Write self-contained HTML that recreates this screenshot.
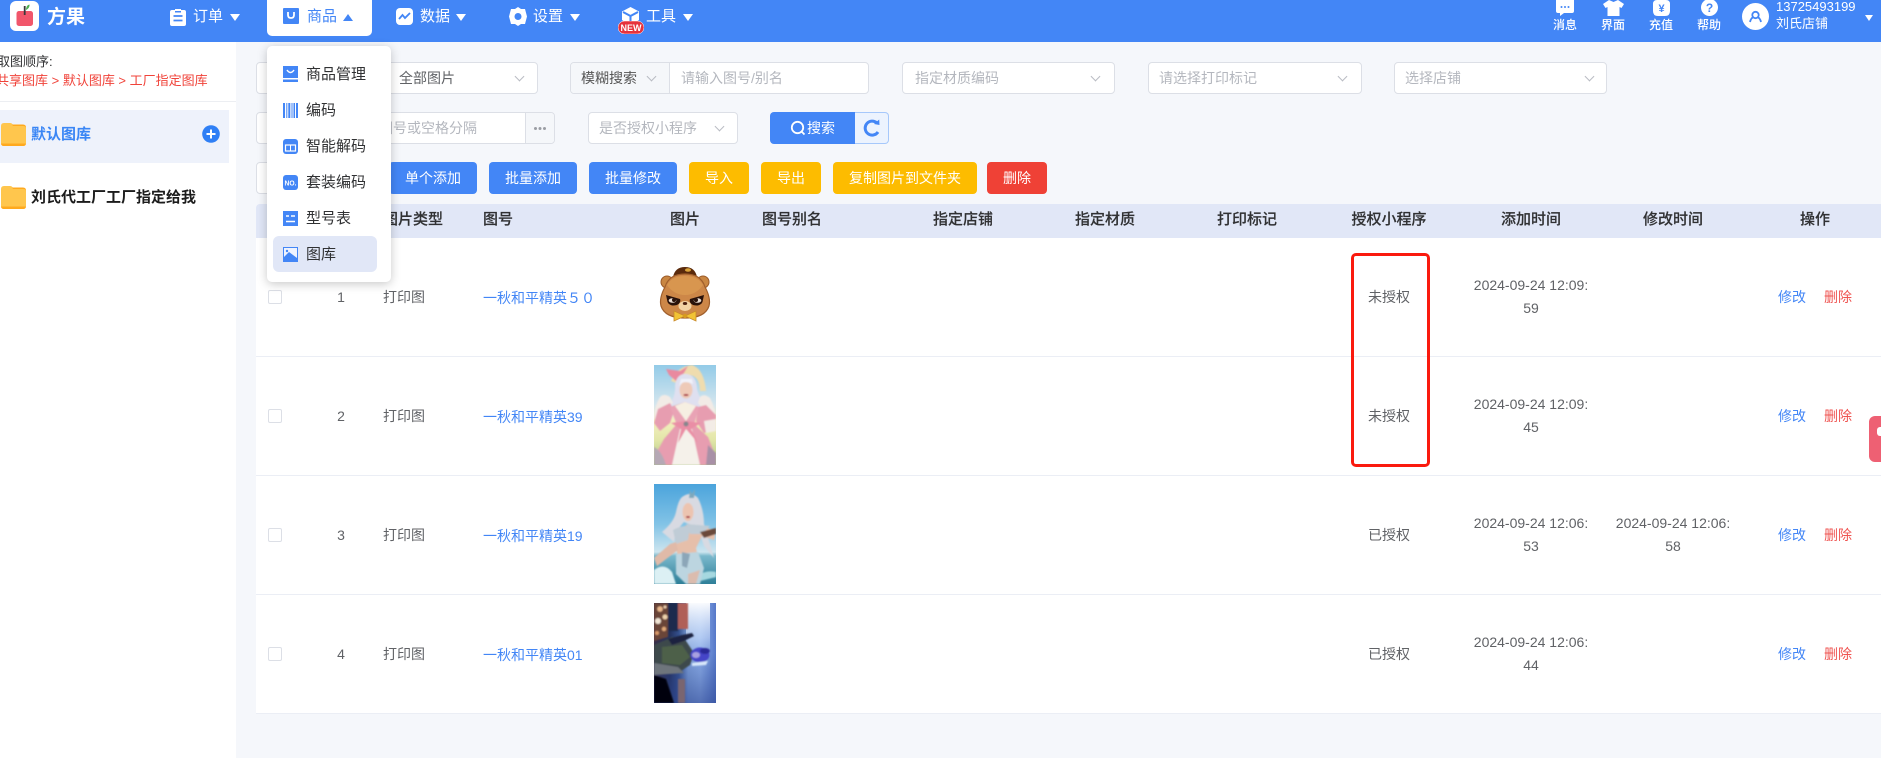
<!DOCTYPE html>
<html lang="zh"><head><meta charset="utf-8"><title>图库</title>
<style>
*{box-sizing:border-box}
html,body{margin:0;padding:0}
body{width:1881px;height:758px;overflow:hidden;position:relative;background:#f5f7fb;font-family:"Liberation Sans","Noto Sans CJK SC",sans-serif;font-size:14px;color:#606266}
.a,.t,.b,.box,.ch,.car,svg{position:absolute}
.t{white-space:nowrap;line-height:20px;height:20px}
.c{transform:translateX(-50%)}
.hd{background:#4386f6;left:0;top:0;width:1881px;height:42px}
.nav{color:#fff;font-size:15px;top:7px}
.car{width:0;height:0;border-left:5px solid transparent;border-right:5px solid transparent;border-top:7px solid #fff}
.up{border-top:0;border-bottom:7px solid #4386f6}
.tl{color:#fff;font-size:12px;top:15px;line-height:20px}
.box{background:#fff;border:1px solid #dcdfe6;border-radius:4px;height:32px}
.ph{color:#b4b7be;font-size:14px}
.ch{width:7px;height:7px;border-right:1px solid #b9bcc3;border-bottom:1px solid #b9bcc3;transform:rotate(45deg)}
.b{height:32px;top:162px;border-radius:4px;color:#fff;text-align:center;line-height:32px;font-size:14px}
.bl{background:#4386f6}.am{background:#fdbc00}.rd{background:#ef4136}
.th{color:#303133;font-size:15px;top:210px;font-weight:500;-webkit-text-stroke:.15px #303133}
.row{left:256px;width:1625px;height:119px;background:#fff;border-bottom:1px solid #ebeef5}
.cb{position:absolute;left:268px;width:14px;height:14px;background:#fff;border:1px solid #dcdfe6;border-radius:2px}
.lnk{color:#4386f6;font-size:14px;left:483px}
.op{color:#4386f6}.del{color:#ef5350}
.dd{left:267px;top:46px;width:124px;height:236px;background:#fff;border-radius:5px;box-shadow:0 2px 10px rgba(0,0,0,.22)}
.mi{left:306px;color:#303133;font-size:15px}
</style></head><body>

<!-- sidebar -->
<div class="a" style="left:0;top:42px;width:236px;height:716px;background:#fff"></div>
<div class="t" style="left:-3px;top:52px;font-size:13px;color:#303133">取图顺序:</div>
<div class="t" style="left:-4px;top:71px;font-size:13px;color:#f0433a">共享图库 &gt; 默认图库 &gt; 工厂指定图库</div>
<div class="a" style="left:0;top:101px;width:236px;height:1px;background:#eceef2"></div>
<div class="a" style="left:0;top:110px;width:229px;height:53px;background:#eef2fb"></div>
<svg style="left:1px;top:123px" width="25" height="23" viewBox="0 0 25 23"><path d="M0 3Q0 0 3 0H9Q11 0 12 2H22Q25 2 25 5V20Q25 23 22 23H3Q0 23 0 20Z" fill="#ffc64d"/><path d="M0 20.500H25V20Q25 23 22 23H3Q0 23 0 20Z" fill="#ffa91e"/><path d="M11 1.500H22Q25 1.500 25 4.500V5.500Q25 3 22 3H12Z" fill="#ffa91e"/></svg>
<div class="t" style="left:31px;top:125px;font-size:15px;font-weight:700;color:#3a86f5">默认图库</div>
<svg style="left:202px;top:125px" width="18" height="18" viewBox="0 0 18 18"><circle cx="9" cy="9" r="8.8" fill="#2f7ff5"/><path d="M4.5 9h9M9 4.5v9" stroke="#fff" stroke-width="2"/></svg>
<svg style="left:1px;top:186px" width="25" height="23" viewBox="0 0 25 23"><path d="M0 3Q0 0 3 0H9Q11 0 12 2H22Q25 2 25 5V20Q25 23 22 23H3Q0 23 0 20Z" fill="#ffc64d"/><path d="M0 20.500H25V20Q25 23 22 23H3Q0 23 0 20Z" fill="#ffa91e"/><path d="M11 1.500H22Q25 1.500 25 4.500V5.500Q25 3 22 3H12Z" fill="#ffa91e"/></svg>
<div class="t" style="left:31px;top:188px;font-size:15px;font-weight:700;color:#1c1c1c">刘氏代工厂工厂指定给我</div>

<!-- filters -->
<div class="box" style="left:256px;top:62px;width:282px"></div>
<div class="t" style="left:399px;top:68px;color:#606266">全部图片</div>
<div class="ch" style="left:516px;top:73px"></div>
<div class="box" style="left:570px;top:62px;width:299px"></div>
<div class="a" style="left:571px;top:63px;width:99px;height:30px;background:#f5f7fa;border-right:1px solid #dcdfe6;border-radius:3px 0 0 3px"></div>
<div class="t" style="left:581px;top:68px;color:#555">模糊搜索</div>
<div class="ch" style="left:648px;top:73px"></div>
<div class="t ph" style="left:681px;top:68px">请输入图号/别名</div>
<div class="box" style="left:902px;top:62px;width:213px"></div>
<div class="t ph" style="left:915px;top:68px">指定材质编码</div>
<div class="ch" style="left:1092px;top:73px"></div>
<div class="box" style="left:1148px;top:62px;width:214px"></div>
<div class="t ph" style="left:1159px;top:68px">请选择打印标记</div>
<div class="ch" style="left:1339px;top:73px"></div>
<div class="box" style="left:1394px;top:62px;width:213px"></div>
<div class="t ph" style="left:1405px;top:68px">选择店铺</div>
<div class="ch" style="left:1586px;top:73px"></div>

<div class="box" style="left:256px;top:112px;width:299px"></div>
<div class="a" style="left:525px;top:113px;width:29px;height:30px;background:#f5f7fa;border-left:1px solid #dcdfe6;border-radius:0 3px 3px 0"></div>
<div class="a" style="left:534px;top:127px;width:3px;height:3px;border-radius:2px;background:#9b9ea4;box-shadow:4.500px 0 0 #9b9ea4,9px 0 0 #9b9ea4"></div>
<div class="t ph" style="left:379px;top:118px">图号或空格分隔</div>
<div class="box" style="left:588px;top:112px;width:150px"></div>
<div class="t ph" style="left:599px;top:118px">是否授权小程序</div>
<div class="ch" style="left:716px;top:123px"></div>
<div class="a" style="left:770px;top:112px;width:85px;height:32px;background:#4386f6;border-radius:4px 0 0 4px"></div>
<svg style="left:790px;top:120px" width="16" height="16" viewBox="0 0 16 16"><circle cx="7.5" cy="7.5" r="5.7" fill="none" stroke="#fff" stroke-width="1.8"/><path d="M11.5 11.5l3 3" stroke="#fff" stroke-width="1.8"/></svg>
<div class="t" style="left:807px;top:118px;color:#fff">搜索</div>
<div class="a" style="left:855px;top:112px;width:34px;height:32px;background:#ecf3fe;border:1px solid #a6c8fb;border-left:0;border-radius:0 4px 4px 0"></div>
<svg style="left:863px;top:119px" width="18" height="18" viewBox="0 0 18 18"><path d="M14 4A7 7 0 1 0 15 13" fill="none" stroke="#4386f6" stroke-width="3"/><path d="M11 5l5.500 1-.3-5.500z" fill="#4386f6"/></svg>

<div class="box" style="left:256px;top:162px;width:140px"></div>
<div class="b bl" style="left:389px;width:88px">单个添加</div>
<div class="b bl" style="left:489px;width:88px">批量添加</div>
<div class="b bl" style="left:589px;width:88px">批量修改</div>
<div class="b am" style="left:689px;width:60px">导入</div>
<div class="b am" style="left:761px;width:60px">导出</div>
<div class="b am" style="left:833px;width:144px">复制图片到文件夹</div>
<div class="b rd" style="left:987px;width:60px">删除</div>

<!-- table -->
<div class="a" style="left:256px;top:204px;width:1625px;height:34px;background:#e1e7f7;border-radius:4px 0 0 0"></div>
<div class="t th" style="left:383px">图片类型</div>
<div class="t th" style="left:483px">图号</div>
<div class="t th c" style="left:685px">图片</div>
<div class="t th" style="left:762px">图号别名</div>
<div class="t th c" style="left:963px">指定店铺</div>
<div class="t th c" style="left:1105px">指定材质</div>
<div class="t th c" style="left:1247px">打印标记</div>
<div class="t th c" style="left:1389px">授权小程序</div>
<div class="t th c" style="left:1531px">添加时间</div>
<div class="t th c" style="left:1673px">修改时间</div>
<div class="t th c" style="left:1815px">操作</div>

<div class="a row" style="top:238px"></div>
<div class="a row" style="top:357px"></div>
<div class="a row" style="top:476px"></div>
<div class="a row" style="top:595px"></div>

<div class="cb" style="top:290px"></div><div class="t c" style="left:341px;top:287px">1</div><div class="t" style="left:383px;top:287px">打印图</div><div class="t lnk" style="top:288px">一秋和平精英５０</div>
<div class="cb" style="top:409px"></div><div class="t c" style="left:341px;top:406px">2</div><div class="t" style="left:383px;top:406px">打印图</div><div class="t lnk" style="top:407px">一秋和平精英39</div>
<div class="cb" style="top:528px"></div><div class="t c" style="left:341px;top:525px">3</div><div class="t" style="left:383px;top:525px">打印图</div><div class="t lnk" style="top:526px">一秋和平精英19</div>
<div class="cb" style="top:647px"></div><div class="t c" style="left:341px;top:644px">4</div><div class="t" style="left:383px;top:644px">打印图</div><div class="t lnk" style="top:645px">一秋和平精英01</div>

<!-- bear -->
<svg style="left:658px;top:265px" width="54" height="60" viewBox="0 0 54 60">
<path d="M15 12Q17 2 27 2T39 12Z" fill="#5a2a0c"/><ellipse cx="30" cy="5" rx="3" ry="1.800" fill="#d9a23a"/>
<circle cx="9" cy="17" r="6" fill="#c98642" stroke="#9a5a28"/><circle cx="45" cy="17" r="6" fill="#c98642" stroke="#9a5a28"/>
<path d="M7 22Q11 9 27 9T47 22Q53 33 51 41Q47 53 27 53T3 41Q1 33 7 22Z" fill="#cd8748" stroke="#a05f2c" stroke-width="1.200"/>
<path d="M9 20Q14 11 27 11T45 20Q38 30 27 30T9 20Z" fill="#d8964f"/>
<path d="M8 30l14 4a6.500 5 0 0 1-12.500 3z" fill="#2a120a"/><path d="M46 30l-14 4a6.500 5 0 0 0 12.500 3z" fill="#2a120a"/>
<ellipse cx="14.500" cy="35.500" rx="3.800" ry="2.300" fill="#e9dcd2"/><ellipse cx="39.500" cy="35.500" rx="3.800" ry="2.300" fill="#e9dcd2"/>
<circle cx="16" cy="35" r="2" fill="#2a120a"/><circle cx="38" cy="35" r="2" fill="#2a120a"/>
<ellipse cx="27" cy="41" rx="6.500" ry="5" fill="#f3d3a4"/><ellipse cx="27" cy="38.500" rx="2.200" ry="1.500" fill="#4a2010"/>
<path d="M27 51L16 46V56ZM27 51L38 46V56Z" fill="#f1c335" stroke="#c98a2a" stroke-width=".8"/><circle cx="27" cy="51" r="2.200" fill="#d79a20"/>
</svg>

<!-- image 2 -->
<svg style="left:654px;top:365px" width="62" height="100" viewBox="0 0 62 100">
<defs><filter id="f1" x="-10%" y="-10%" width="120%" height="120%"><feGaussianBlur stdDeviation="0.7"/></filter>
<linearGradient id="g1" x1="0" y1="0" x2="0" y2="1"><stop offset="0" stop-color="#93cbe8"/><stop offset=".4" stop-color="#d5e6ee"/><stop offset=".55" stop-color="#f4f0c0"/><stop offset=".75" stop-color="#e2e6a8"/><stop offset="1" stop-color="#a9c784"/></linearGradient></defs>
<rect width="62" height="100" fill="url(#g1)"/>
<g filter="url(#f1)">
<path d="M17 16Q24 1 38 0Q50 4 52 26L46 26Q46 12 36 10Q26 10 22 18Z" fill="#efdcae"/>
<path d="M12 4L26 6L34 1L30 8L22 16L15 10Z" fill="#e9899f"/>
<path d="M21 20Q23 8 33 9Q43 11 43 24Q46 36 53 42L40 42L34 38H26L14 42Q22 32 21 20Z" fill="#dfe0f0"/>
<ellipse cx="32" cy="25" rx="6.500" ry="8.500" fill="#eecab8"/><path d="M25 22Q28 14 39 19L38 14L27 14Z" fill="#f1f2fa"/><ellipse cx="32" cy="30" rx="2.500" ry="1" fill="#a82c3c"/>
<path d="M0 54Q0 42 6 32Q10 28 16 32L19 38Q12 42 12 52Z" fill="#f2ebe6"/><path d="M62 58Q62 44 56 33Q50 28 46 32L44 38Q50 44 50 52Z" fill="#f2ebe6"/>
<path d="M0 58L4 44L16 38L20 46L16 58L6 66Z" fill="#e79db0"/><path d="M62 64V50L52 40L44 42L42 56L50 68Z" fill="#e79db0"/>
<path d="M50 56L62 54V66L52 68Z" fill="#f3ece6"/>
<path d="M16 42L31 37L45 42L40 60H23Z" fill="#e9a3b5"/><path d="M21 41L31 37L42 41L32 56Z" fill="#f6efe2"/>
<path d="M22 60H41L54 72L62 92V100H0V92L10 74Z" fill="#e79db0"/>
<path d="M26 64H38L46 100H18Z" fill="#f5f1ea"/>
<path d="M17 58L32 56L47 58L37 64L44 78L32 64L24 78L27 64Z" fill="#ea8ea5"/><circle cx="32" cy="59" r="2.500" fill="#87878e"/>
<path d="M0 82Q8 86 12 100H0Z" fill="#b5a8b5"/><path d="M54 80L62 88V100H52Z" fill="#a890a6"/>
</g></svg>

<!-- image 3 -->
<svg style="left:654px;top:484px" width="62" height="100" viewBox="0 0 62 100">
<defs><linearGradient id="g2" x1="0" y1="0" x2="0" y2="1"><stop offset="0" stop-color="#4ba4dc"/><stop offset=".4" stop-color="#82c3e6"/><stop offset=".68" stop-color="#cde5ef"/><stop offset=".72" stop-color="#7ab8cc"/><stop offset="1" stop-color="#2e7f98"/></linearGradient></defs>
<rect width="62" height="100" fill="url(#g2)"/>
<g filter="url(#f1)">
<path d="M0 86Q10 78 18 88L22 100H0Z" fill="#dcf0f4"/><path d="M46 90Q54 86 62 88V93L46 97Z" fill="#a6d8e0"/>
<path d="M27 14Q36 6 44 14Q50 26 50 40L60 74L50 62L44 44L30 38Q22 46 20 58L8 48Q20 38 22 28Q24 18 27 14Z" fill="#d8dae2"/>
<ellipse cx="34" cy="28" rx="5.500" ry="9" fill="#ecc4b0"/><ellipse cx="34" cy="33" rx="2" ry="1" fill="#a83040"/>
<path d="M35 14L36 6L38 10L41 5L40 14Z" fill="#7fa8bc"/>
<path d="M22 48Q32 38 46 42L60 46Q62 50 60 56L48 52L42 64L44 74H24L22 62Z" fill="#e6bfaa"/>
<path d="M19 46Q30 40 36 44L34 56L22 60ZM32 40L56 42L48 50L36 50Z" fill="#c0ccd6"/>
<path d="M0 74L16 60L22 58L24 66L3 82Z" fill="#e0baa8"/>
<path d="M46 48L62 44V50L50 54Z" fill="#6b4a3a"/>
<path d="M22 70L44 68L50 84L46 100H32L22 90Z" fill="#bcd5e0"/><path d="M28 68L36 70L33 84L28 82Z" fill="#8ca6b8"/>
<path d="M34 90L46 86L42 100H34Z" fill="#dbbcae"/>
</g></svg>

<!-- image 4 -->
<svg style="left:654px;top:603px" width="62" height="100" viewBox="0 0 62 100">
<defs><linearGradient id="g3" x1="0" y1="0" x2="1" y2="0"><stop offset="0" stop-color="#3b3048"/><stop offset=".25" stop-color="#23305c"/><stop offset=".4" stop-color="#34508c"/><stop offset=".55" stop-color="#7ea0d8"/><stop offset=".75" stop-color="#8eb0ea"/><stop offset="1" stop-color="#5678c8"/></linearGradient>
<linearGradient id="g4" x1="0" y1="0" x2="0" y2="1"><stop offset="0" stop-color="#fff" stop-opacity=".95"/><stop offset=".35" stop-color="#cfe0fa" stop-opacity=".55"/><stop offset=".7" stop-color="#6f90d0" stop-opacity="0"/></linearGradient>
<linearGradient id="g5" x1="0" y1="0" x2="0" y2="1"><stop offset=".5" stop-color="#2c4490" stop-opacity="0"/><stop offset="1" stop-color="#2c4490" stop-opacity=".6"/></linearGradient></defs>
<rect width="62" height="100" fill="url(#g3)"/>
<rect x="32" width="24" height="100" fill="url(#g4)"/>
<rect width="62" height="100" fill="url(#g5)"/>
<g filter="url(#f1)">
<rect x="24" y="0" width="10" height="26" fill="#b05f58"/><rect x="14" y="0" width="10" height="28" fill="#1f2a4e"/><rect x="24" y="76" width="7" height="24" fill="#7a6570"/>
<path d="M0 0H14V34L0 38Z" fill="#6a4438"/>
<path d="M0 72L12 76L20 100H0Z" fill="#050507"/>
<circle cx="6" cy="6" r="2.800" fill="#eab88c"/><circle cx="11" cy="14" r="2.500" fill="#eed2ac"/><circle cx="4" cy="18" r="3" fill="#f0e4d4"/><circle cx="10" cy="26" r="2.200" fill="#e0a878"/><circle cx="3" cy="30" r="2" fill="#d89868"/><circle cx="11" cy="4" r="1.500" fill="#f0d0b0"/>
<path d="M0 42L18 34L32 38L40 50L36 62L24 70L0 68Z" fill="#3c4a4c"/>
<path d="M14 36L28 32L38 30L40 33L30 38L18 42Z" fill="#1e2440"/>
<path d="M8 44L28 42L36 54L26 62L8 60Z" fill="#4e6048"/>
<ellipse cx="46" cy="52" rx="9.500" ry="7.500" fill="#4444c8"/><ellipse cx="51" cy="48" rx="5" ry="3" fill="#2a2a98"/><ellipse cx="42" cy="52" rx="4" ry="3" fill="#a8a0e0"/>
<path d="M38 60L54 58L52 62L38 63Z" fill="#d8e8fa"/>
<path d="M0 60L24 64L30 70L0 72Z" fill="#6e747c"/>
</g></svg>

<div class="t c" style="left:1389px;top:287px">未授权</div>
<div class="t c" style="left:1389px;top:406px">未授权</div>
<div class="t c" style="left:1389px;top:525px">已授权</div>
<div class="t c" style="left:1389px;top:644px">已授权</div>

<div class="t c" style="left:1531px;top:275px">2024-09-24 12:09:</div><div class="t c" style="left:1531px;top:298px">59</div>
<div class="t c" style="left:1531px;top:394px">2024-09-24 12:09:</div><div class="t c" style="left:1531px;top:417px">45</div>
<div class="t c" style="left:1531px;top:513px">2024-09-24 12:06:</div><div class="t c" style="left:1531px;top:536px">53</div>
<div class="t c" style="left:1673px;top:513px">2024-09-24 12:06:</div><div class="t c" style="left:1673px;top:536px">58</div>
<div class="t c" style="left:1531px;top:632px">2024-09-24 12:06:</div><div class="t c" style="left:1531px;top:655px">44</div>

<div class="t op" style="left:1778px;top:287px">修改</div><div class="t del" style="left:1824px;top:287px">删除</div>
<div class="t op" style="left:1778px;top:406px">修改</div><div class="t del" style="left:1824px;top:406px">删除</div>
<div class="t op" style="left:1778px;top:525px">修改</div><div class="t del" style="left:1824px;top:525px">删除</div>
<div class="t op" style="left:1778px;top:644px">修改</div><div class="t del" style="left:1824px;top:644px">删除</div>

<div class="a" style="left:1351px;top:253px;width:79px;height:214px;border:3px solid #fa1a0e;border-radius:5px"></div>
<div class="a" style="left:1869px;top:416px;width:12px;height:46px;background:#ee6073;border-radius:6px 0 0 6px"></div>
<div class="a" style="left:1877px;top:427px;width:4px;height:9px;background:#fff;border-radius:3px 0 0 3px"></div>

<!-- header -->
<div class="a hd"></div>
<div class="a" style="left:10px;top:1px;width:29px;height:30px;background:#fff;border-radius:6px"></div>
<svg style="left:10px;top:1px" width="29" height="30" viewBox="0 0 29 30"><rect x="6.500" y="10" width="16.500" height="15" rx="2.500" fill="#f1566b"/><rect x="13.800" y="5" width="1.800" height="9" fill="#3a3a3a"/><path d="M16 8Q16.500 4 19.500 3.500Q20 7 16 9Z" fill="#4caf50"/></svg>
<div class="t" style="left:47px;top:7px;font-size:19px;font-weight:700;color:#fff;line-height:22px;height:22px">方果</div>

<svg style="left:170px;top:8px" width="16" height="18" viewBox="0 0 16 18"><path d="M2 2H5V1H11V2H14Q16 2 16 4V16Q16 18 14 18H2Q0 18 0 16V4Q0 2 2 2Z" fill="#fff"/><path d="M3.500 8H12.500M3.500 12.500H12.500" stroke="#4386f6" stroke-width="1.800"/><rect x="5" y="3" width="6" height="1.500" fill="#4386f6"/></svg>
<div class="t nav" style="left:193px">订单</div><div class="car" style="left:230px;top:14px"></div>

<div class="a" style="left:267px;top:0;width:105px;height:36px;background:#fff;border-radius:0 0 5px 5px"></div>
<svg style="left:283px;top:8px" width="16" height="16" viewBox="0 0 16 16"><rect width="16" height="16" rx="1" fill="#4386f6"/><path d="M5 4V7Q5 10 8 10T11 7V4" fill="none" stroke="#fff" stroke-width="1.800"/></svg>
<div class="t nav" style="left:307px;color:#4386f6">商品</div><div class="car up" style="left:343px;top:14px"></div>

<svg style="left:396px;top:8px" width="17" height="17" viewBox="0 0 17 17"><rect width="17" height="17" rx="4" fill="#fff"/><path d="M3 11L6.500 7L9 10L14 5" fill="none" stroke="#4386f6" stroke-width="1.800"/></svg>
<div class="t nav" style="left:420px">数据</div><div class="car" style="left:456px;top:14px"></div>

<svg style="left:509px;top:7px" width="18" height="19" viewBox="0 0 18 19"><path d="M9 0L12 2L16 2L18 9.500L16 17L12 17L9 19L6 17L2 17L0 9.500L2 2L6 2Z" fill="#fff"/><circle cx="9" cy="9.500" r="3.500" fill="#4386f6"/></svg>
<div class="t nav" style="left:533px">设置</div><div class="car" style="left:570px;top:14px"></div>

<svg style="left:622px;top:7px" width="17" height="20" viewBox="0 0 17 20"><path d="M8.500 0L17 4.500V13L8.500 19L0 13V4.500Z" fill="#fff"/><path d="M1 5L8.500 9L16 5M8.500 9V18" fill="none" stroke="#4386f6" stroke-width="2"/></svg>
<svg style="left:618px;top:21px" width="26" height="13" viewBox="0 0 26 13"><rect width="26" height="13" rx="6.500" fill="#e6323c" stroke="#fff" stroke-width=".5"/><text x="13" y="10" font-family="Liberation Sans" font-size="9" font-weight="700" fill="#fff" text-anchor="middle">NEW</text></svg>
<div class="t nav" style="left:646px">工具</div><div class="car" style="left:683px;top:14px"></div>

<!-- right icons -->
<svg style="left:1556px;top:0" width="18" height="17" viewBox="0 0 18 17"><path d="M0 0H18V11Q18 13 16 13H8L4 16V13H2Q0 13 0 11Z" fill="#fff"/><circle cx="5.500" cy="7" r="1" fill="#4386f6"/><circle cx="9" cy="7" r="1" fill="#4386f6"/><circle cx="12.500" cy="7" r="1" fill="#4386f6"/></svg>
<svg style="left:1603px;top:0" width="21" height="16" viewBox="0 0 21 16"><path d="M6 0L10.500 2L15 0L21 4L18.500 8L16.500 7V16H4.500V7L2.500 8L0 4Z" fill="#fff"/></svg>
<svg style="left:1653px;top:0" width="17" height="16" viewBox="0 0 17 16"><path d="M4 0H13Q17 0 17 4V11Q17 16 12 16H5Q0 16 0 11V4Q0 0 4 0Z" fill="#fff"/><text x="8.500" y="12" font-family="Liberation Sans" font-size="11" font-weight="700" fill="#4386f6" text-anchor="middle">¥</text></svg>
<svg style="left:1701px;top:0" width="17" height="16" viewBox="0 0 17 16"><circle cx="8.500" cy="7.500" r="8.500" fill="#fff"/><text x="8.500" y="12" font-family="Liberation Sans" font-size="12" font-weight="700" fill="#4386f6" text-anchor="middle">?</text></svg>
<div class="t tl c" style="left:1565px;font-weight:500">消息</div>
<div class="t tl c" style="left:1613px;font-weight:500">界面</div>
<div class="t tl c" style="left:1661px;font-weight:500">充值</div>
<div class="t tl c" style="left:1709px;font-weight:500">帮助</div>
<svg style="left:1742px;top:3px" width="27" height="27" viewBox="0 0 27 27"><circle cx="13.500" cy="13.500" r="13.500" fill="#fff"/><circle cx="13.500" cy="12" r="3.200" fill="none" stroke="#4386f6" stroke-width="1.800"/><path d="M8 19Q9 15 11 14.500M19 19Q18 15 16 14.500" fill="none" stroke="#4386f6" stroke-width="1.800"/></svg>
<div class="t" style="left:1776px;top:-3px;font-size:13px;color:#fff">13725493199</div>
<div class="t" style="left:1776px;top:14px;font-size:13px;color:#fff">刘氏店铺</div>
<div class="car" style="left:1864.500px;top:15px;border-left-width:4.500px;border-right-width:4.500px;border-top-width:6px"></div>

<!-- dropdown -->
<div class="a dd"></div>
<svg style="left:283px;top:66px" width="15" height="16" viewBox="0 0 15 16"><rect width="15" height="12" fill="#4386f6"/><rect y="13.500" width="15" height="2.500" fill="#4386f6"/><path d="M4 4Q7.500 9 11 4" fill="none" stroke="#fff" stroke-width="1.500"/></svg>
<div class="t mi" style="top:65px">商品管理</div>
<svg style="left:283px;top:103px" width="15" height="15" viewBox="0 0 15 15" fill="#4386f6"><rect width="2" height="15"/><rect x="3.300" width="1" height="15"/><rect x="5.300" width="2" height="15"/><rect x="8.500" width="1" height="15"/><rect x="10.500" width="1.500" height="15"/><rect x="13" width="2" height="15"/></svg>
<div class="t mi" style="top:101px">编码</div>
<svg style="left:283px;top:139px" width="15" height="15" viewBox="0 0 15 15"><rect width="15" height="15" rx="3" fill="#4386f6"/><rect x="2.500" y="6" width="10" height="6" fill="none" stroke="#fff" stroke-width="1.200"/><path d="M7.500 6V12" stroke="#fff"/></svg>
<div class="t mi" style="top:137px">智能解码</div>
<svg style="left:283px;top:175px" width="15" height="15" viewBox="0 0 15 15"><rect width="15" height="15" rx="3" fill="#4386f6"/><text x="7.500" y="10.500" font-family="Liberation Sans" font-size="7.500" font-weight="700" fill="#fff" text-anchor="middle" textLength="12" lengthAdjust="spacingAndGlyphs">NO.</text></svg>
<div class="t mi" style="top:173px">套装编码</div>
<svg style="left:283px;top:211px" width="15" height="15" viewBox="0 0 15 15"><rect width="15" height="15" fill="#4386f6"/><path d="M3 5H6M8 5H12M3 10.500H12" stroke="#fff" stroke-width="1.500"/></svg>
<div class="t mi" style="top:209px">型号表</div>
<div class="a" style="left:273px;top:236px;width:104px;height:36px;background:#e1e7f7;border-radius:6px"></div>
<svg style="left:283px;top:247px" width="15" height="15" viewBox="0 0 15 15"><rect width="15" height="15" fill="#4386f6"/><rect x="1" y="1" width="13" height="12" fill="#eef3ff"/><circle cx="4" cy="4" r="1.200" fill="#4386f6"/><path d="M1 13V10L6 5L14 11V15H1Z" fill="#4386f6"/></svg>
<div class="t mi" style="top:245px">图库</div>
</body></html>
